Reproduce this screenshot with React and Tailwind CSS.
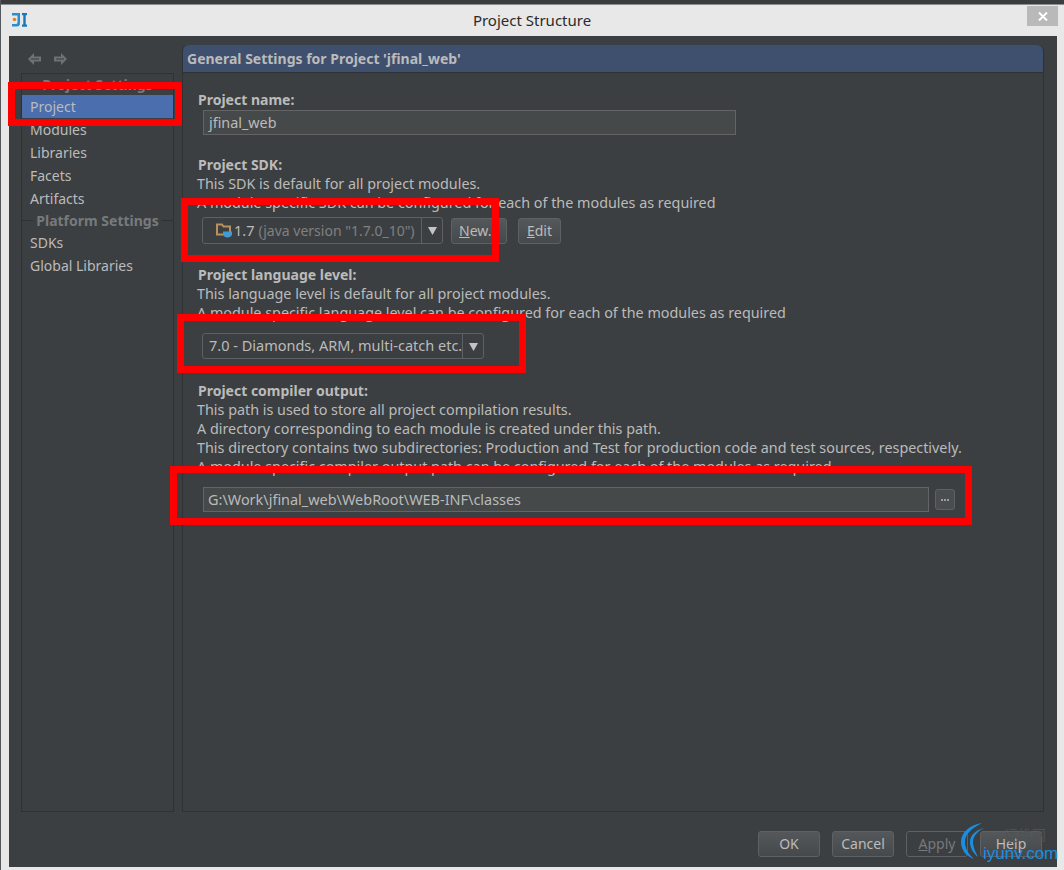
import React from 'react';

const font = { fontFamily: '"Noto Sans", "Open Sans", sans-serif' };

const RedBox = ({ className }) => (
    <div className={`absolute border-[7px] border-[#ff0000] pointer-events-none ${className}`} />
);

const SideHeading = ({ children, className = '' }) => (
    <div className={`flex items-center ${className}`}>
        <div className="flex-1 h-px bg-[#2f3234]" />
        <span className="px-[3px] text-[14px] font-bold text-[#777a7c] whitespace-nowrap">{children}</span>
        <div className="flex-1 h-px bg-[#2f3234]" />
    </div>
);

const SideItem = ({ children, active }) => (
    <div className={`h-[23px] leading-[23px] pl-[8px] text-[14px] text-[#bbbbbb] ${active ? 'bg-[#4b6eaf]' : ''}`}>{children}</div>
);

const Label = ({ children, className = '' }) => (
    <div className={`h-[19px] leading-[19px] text-[14px] font-bold text-[#bbbbbb] whitespace-nowrap ${className}`}>{children}</div>
);

const Line = ({ children }) => (
    <div className="h-[19px] leading-[19px] -ml-[1px] text-[14.35px] text-[#bbbbbb] whitespace-nowrap">{children}</div>
);

const Arrow = () => (
    <div className="w-[21px] h-full flex items-center justify-center border-l border-[#5e6163]">
        <svg width="9" height="9" viewBox="0 0 9 9"><path d="M0 1h9L4.500 9z" fill="#c4c4c4" /></svg>
    </div>
);

const Btn = ({ children, className = '' }) => (
    <div className={`flex items-center justify-center border border-[#5e6163] rounded-[3px] text-[14px] text-[#bbbbbb] bg-gradient-to-b from-[#54585a] to-[#46494b] ${className}`}>{children}</div>
);

export default function App() {
    return (
        <div className="relative w-[1064px] h-[870px] overflow-hidden flex flex-col bg-[#e8e8e8] border-l border-[#55585a]" style={font}>
            <div className="h-[5px] bg-[#3a3c3e] border-b border-[#8a8c8d]" />

            {/* title bar */}
            <div className="h-[31px] relative flex items-center justify-center text-[15px] text-[#2b2b2b]">
                <svg className="absolute left-[11px] top-[8px]" width="15" height="14" viewBox="0 0 15 14">
                    <path d="M0 0h8v10.500Q8 13.500 5 13.500H0V11h3.500Q5.500 11 5.500 9.500V2.500H0z" fill="#2a8fd0" />
                    <circle cx="2.500" cy="6.500" r="1.800" fill="#d98a1e" />
                    <path d="M10 0h5v2.200h-1.300v9.300H15v2.200h-5v-2.200h1.300V2.200H10z" fill="#1877b8" />
                </svg>
                <span className="-ml-[1px]">Project Structure</span>
                <div className="absolute right-[6px] top-[1px] w-[31px] h-[20px] bg-[#b9b9b9] flex items-center justify-center">
                    <svg width="10" height="9" viewBox="0 0 10 9"><path d="M1 .5l8 8M9 .5l-8 8" stroke="#fff" strokeWidth="2" /></svg>
                </div>
            </div>

            {/* dialog body */}
            <div className="ml-[8px] w-[1048px] h-[831px] bg-[#3c3f41] flex flex-col">
                <div className="flex pt-[9px]">
                    {/* left column */}
                    <div className="ml-[12px] w-[153px] flex flex-col">
                        <div className="h-[28px] flex items-center gap-[13px] pl-[7px] pb-[1px]">
                            <svg width="13" height="12" viewBox="0 0 13 12">
                                <path d="M6 0L0 6l6 6V8.500h7v-5H6z" fill="#6e7274" />
                                <path d="M3 6h8" stroke="#4c4f51" strokeWidth="1.500" />
                            </svg>
                            <svg width="13" height="12" viewBox="0 0 13 12">
                                <path d="M7 0l6 6-6 6V8.500H0v-5h7z" fill="#6e7274" />
                                <path d="M2 6h8" stroke="#4c4f51" strokeWidth="1.500" />
                            </svg>
                        </div>
                        <div className="h-[739px] border border-[#2f3234]">
                            <SideHeading className="h-[21px]">Project Settings</SideHeading>
                            <SideItem active>Project</SideItem>
                            <SideItem>Modules</SideItem>
                            <SideItem>Libraries</SideItem>
                            <SideItem>Facets</SideItem>
                            <SideItem>Artifacts</SideItem>
                            <SideHeading className="h-[21px]">Platform Settings</SideHeading>
                            <SideItem>SDKs</SideItem>
                            <SideItem>Global Libraries</SideItem>
                        </div>
                    </div>

                    {/* right panel */}
                    <div className="ml-[8px] w-[862px] h-[767px] border border-[#2f3234] border-t-0 rounded-t-[6px] flex flex-col">
                        <div className="h-[28px] leading-[27px] pl-[4px] bg-[#3f4f6e] rounded-t-[6px] border-b border-[#2f3234] text-[14px] font-bold text-[#bbbbbb]">
                            General Settings for Project 'jfinal_web'
                        </div>
                        <div className="pl-[15px] pt-[17px]">
                            <Label>Project name:</Label>
                            <div className="mt-[1px] ml-[5px] w-[533px] h-[25px] leading-[24px] pl-[5px] border border-[#646464] bg-[#45494a] text-[14.35px] text-[#bbbbbb]">jfinal_web</div>

                            <Label className="mt-[20px]">Project SDK:</Label>
                            <Line>This SDK is default for all project modules.</Line>
                            <Line>A module specific SDK can be configured for each of the modules as required</Line>
                            <div className="mt-[5px] ml-[4px] flex items-center">
                                <div className="w-[241px] h-[27px] flex items-center border border-[#5e6163] rounded-[3px] text-[14px]">
                                    <div className="flex-1 flex items-center pl-[13px] gap-[3px] whitespace-nowrap">
                                        <svg width="16" height="15" viewBox="0 0 16 15">
                                            <path d="M1 1.500h5l1.500 2H14v8H1z" fill="none" stroke="#b8925c" strokeWidth="2" />
                                            <path d="M7 8.500h9v3q-1 3-4.500 3T7 11.500z" fill="#3f9bd8" />
                                        </svg>
                                        <span className="-ml-[1px] text-[14.5px] text-[#bbbbbb]">1.7</span>
                                        <span className="ml-[1px] text-[#808080]">(java version "1.7.0_10")</span>
                                    </div>
                                    <Arrow />
                                </div>
                                <Btn className="ml-[8px] w-[56px] h-[26px]"><span><u>N</u>ew...</span></Btn>
                                <Btn className="ml-[11px] w-[43px] h-[26px]"><span><u>E</u>dit</span></Btn>
                            </div>

                            <Label className="mt-[21px]">Project language level:</Label>
                            <Line>This language level is default for all project modules.</Line>
                            <Line>A module specific language level can be configured for each of the modules as required</Line>
                            <div className="mt-[11px] ml-[4px] w-[282px] h-[26px] flex items-center border border-[#5e6163] rounded-[3px] text-[14.5px] text-[#bbbbbb]">
                                <div className="flex-1 pl-[6px] whitespace-nowrap overflow-hidden">7.0 - Diamonds, ARM, multi-catch etc.</div>
                                <Arrow />
                            </div>

                            <Label className="mt-[22px]">Project compiler output:</Label>
                            <Line>This path is used to store all project compilation results.</Line>
                            <Line>A directory corresponding to each module is created under this path.</Line>
                            <Line>This directory contains two subdirectories: Production and Test for production code and test sources, respectively.</Line>
                            <Line>A module specific compiler output path can be configured for each of the modules as required</Line>
                            <div className="mt-[11px] ml-[5px] flex items-center">
                                <div className="w-[726px] h-[25px] leading-[24px] pl-[4px] border border-[#646464] bg-[#45494a] text-[14.45px] text-[#bbbbbb] whitespace-nowrap">G:\Work\jfinal_web\WebRoot\WEB-INF\classes</div>
                                <div className="ml-[6px] w-[20px] h-[21px] flex items-center justify-center gap-[1px] border border-[#5e6163] rounded-[3px] bg-[#4a4d4f]">
                                    <span className="w-[2px] h-[2px] bg-[#9a9c9e]" />
                                    <span className="w-[2px] h-[2px] bg-[#9a9c9e]" />
                                    <span className="w-[2px] h-[2px] bg-[#9a9c9e]" />
                                </div>
                            </div>
                        </div>
                    </div>
                </div>

                {/* footer buttons */}
                <div className="mt-[19px] ml-[749px] flex gap-[12px] leading-[22px]">
                    <Btn className="w-[62px] h-[26px] from-[#3a5070] to-[#273a55] border-[#4f5a68]">OK</Btn>
                    <Btn className="w-[62px] h-[26px]">Cancel</Btn>
                    <Btn className="w-[62px] h-[26px] bg-none bg-[#3c3f41] !text-[#77797b]"><span><u>A</u>pply</span></Btn>
                    <Btn className="w-[62px] h-[26px]">Help</Btn>
                </div>
            </div>

            {/* annotations painted over the screenshot */}
            <RedBox className="left-[7px] top-[82px] w-[174px] h-[44px]" />
            <RedBox className="left-[180px] top-[198px] w-[318px] h-[64px]" />
            <RedBox className="left-[176px] top-[314px] w-[349px] h-[59px]" />
            <RedBox className="left-[169px] top-[466px] w-[802px] h-[59px]" />

            {/* watermark */}
            <div className="absolute left-[957px] top-[820px] w-[106px] h-[50px]">
                <svg className="absolute left-0 top-0" width="50" height="50" viewBox="0 0 50 50">
                    <path d="M24 3C11 5 3 13 3 22c0 8 5 14 13 17C10 34 7 28 7 22 7 14 14 8 24 3z" fill="#1a8ee0" />
                    <path d="M26 8c-8 2-14 7-14 14 0 6 3 11 8 15-3-6-5-10-5-15 0-6 5-11 11-14z" fill="#1a8ee0" />
                </svg>
                <span className="absolute left-[46px] top-[7px] text-[14px] leading-[14px] text-[#4f5254] whitespace-nowrap" style={{ fontFamily: '"Noto Sans CJK SC", sans-serif' }}>运维网</span>
                <span className="absolute left-[25px] top-[24px] text-[17px] leading-[20px] font-medium text-[#1a8ee0] whitespace-nowrap" style={{ fontFamily: '"Liberation Sans", sans-serif' }}>iyunv.com</span>
            </div>
        </div>
    );
}
